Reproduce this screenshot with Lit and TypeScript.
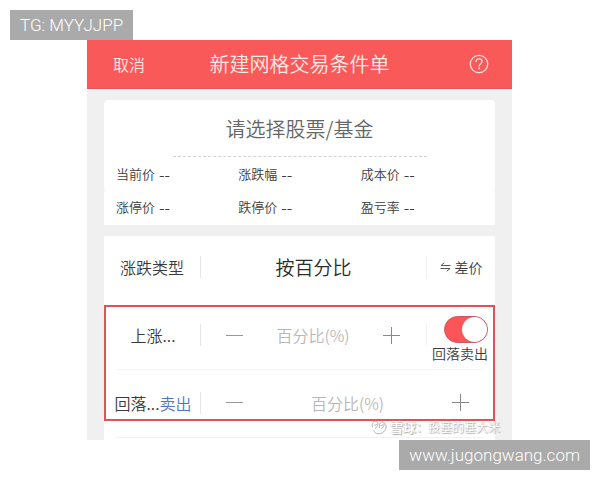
import { LitElement, html, css, svg } from "lit";
import { customElement, state } from "lit/decorators.js";

const QUOTES = ["当前价", "涨跌幅", "成本价", "涨停价", "跌停价", "盈亏率"];

const minus = html`<svg width="17" height="17" viewBox="0 0 17 17" aria-hidden="true">
  ${svg`<path d="M0 8.5H17" stroke="#999" fill="none"/>`}</svg>`;
const plus = html`<svg width="17" height="17" viewBox="0 0 17 17" aria-hidden="true">
  ${svg`<path d="M0 8.5H17M8.5 0V17" stroke="#888" fill="none"/>`}</svg>`;

@customElement("app-root")
export class AppRoot extends LitElement {
  @state() private sellOnFall = true;

  static styles = css`
    :host {
      display: block;
      position: relative;
      box-sizing: border-box;
      min-height: 100vh;
      padding: 40px 88px 40px 87px;
      background: #fff;
      color: #3c3c3c;
      font-family: "Noto Sans CJK SC", sans-serif;
      font-weight: 350;
    }
    * { box-sizing: border-box; }
    button, input {
      font: inherit;
      color: inherit;
      border: 0;
      background: none;
      padding: 0;
      margin: 0;
    }
    svg { display: block; }
    .screen {
      position: relative;
      background: #f0f0f0;
    }
    .bar {
      display: grid;
      grid-template-columns: 48px 1fr 48px;
      align-items: center;
      height: 49px;
      padding: 0 18px;
      background: #f95959;
      border-bottom: 1px solid #dc5a5a;
      color: #ffeae6;
    }
    .cancel { font-size: 16px; line-height: 24px; }
    .title {
      margin: 0;
      font-size: 20px;
      line-height: 28px;
      font-weight: 350;
      text-align: center;
      white-space: nowrap;
    }
    .help { justify-self: end; margin-right: 5px; }
    .body { padding: 11px 17px 0; }
    .pick {
      padding: 0 12px 0;
      height: 90px;
      background: #fff;
      border-radius: 4px 4px 2px 2px;
    }
    .stock {
      display: block;
      width: 100%;
      height: 56px;
      font-size: 20px;
      color: #666;
    }
    .dash {
      width: 254px;
      max-width: 70%;
      margin: 0 auto;
      border-top: 1px dashed #d4d4d4;
    }
    .quotes {
      display: grid;
      grid-template-columns: repeat(3, 1fr);
      height: 34px;
      margin: 0;
      padding: 0 12px;
      align-items: center;
      font-size: 13px;
      line-height: 20px;
    }
    .pick .quotes { padding: 0; }
    .rest {
      background: #fff;
      border-radius: 2px 2px 0 0;
      height: 35px;
    }
    .quote { display: flex; gap: 4px; }
    .quote dd { margin: 0; font-size: 16px; }
    .form { margin-top: 11px; background: #fff; height: 204px; }
    .row {
      display: grid;
      grid-template-columns: 96px 1fr 68px;
      align-items: center;
    }
    .type { height: 69px; padding-bottom: 7px; }
    .name { text-align: center; font-size: 16px; line-height: 24px; white-space: nowrap; }
    .mid {
      display: flex;
      align-items: center;
      height: 22px;
      border-left: 1px solid #e6e6e6;
      border-right: 1px solid #f2f2f2;
    }
    .value { flex: 1; font-size: 19px; line-height: 22px; color: #2c2c2c; }
    .switch-type {
      display: flex;
      align-items: center;
      justify-content: center;
      gap: 4px;
      font-size: 14px;
      line-height: 22px;
    }
    .marked { border: 2px solid #dc5555; height: 116px; }
    .marked .row { grid-template-columns: 94px 1fr 66px; }
    .rise { height: 63px; padding-bottom: 7px; }
    .rule { height: 1px; margin: -1px 11px 0; background: #f3f3f3; }
    .marked .fall { grid-template-columns: 94px 1fr; height: 49px; padding-top: 16px; }
    .step { padding: 0 26px 0 25px; }
    .fall .step { border-right: 0; padding-right: 24px; }
    .amount {
      flex: 1;
      min-width: 0;
      width: 0;
      height: 22px;
      font-size: 16px;
      text-align: center;
      outline: none;
    }
    .amount::placeholder { color: #b8b8b8; opacity: 1; }
    .blue { color: #4a78c4; }
    .toggle {
      display: flex;
      flex-direction: column;
      align-items: flex-end;
      padding: 8px 5px 0 0;
      font-size: 14px;
      line-height: 20px;
      white-space: nowrap;
    }
    .check {
      appearance: none;
      display: flex;
      width: 44px;
      height: 27px;
      border-radius: 14px;
      background: #ccc;
      border: 1px solid #bbb;
    }
    .check::before {
      content: "";
      width: 25px;
      height: 25px;
      border-radius: 50%;
      background: #fff;
    }
    .check:checked {
      background: #fb5558;
      border-color: #c85868;
      justify-content: flex-end;
    }
    .end { margin: 16px 12px 0; height: 1px; background: #f1f1f1; }
    .credit {
      position: absolute;
      right: 12px;
      bottom: 4px;
      display: flex;
      align-items: center;
      gap: 3px;
      color: #fff;
      font-size: 12px;
      line-height: 18px;
      text-shadow: 1px 1px 1px #aaa, 0 0 1px #bbb;
      white-space: nowrap;
    }
    .brand { font-size: 13px; font-weight: 700; }
    .tag {
      position: absolute;
      height: 30px;
      padding: 0 10px;
      background: #aaa;
      color: #fff;
      font: 300 17px/30px Roboto, "Liberation Sans", sans-serif;
      text-decoration: none;
      white-space: nowrap;
    }
    .top { left: 10px; top: 10px; }
    .bottom { right: 10px; bottom: 10px; }
  `;

  private quotes(names: string[]) {
    return html`<dl class="quotes">
      ${names.map((n) => html`<div class="quote"><dt>${n}</dt><dd>--</dd></div>`)}
    </dl>`;
  }

  render() {
    return html`
      <main class="screen">
        <header class="bar">
          <button class="cancel">取消</button>
          <h1 class="title">新建网格交易条件单</h1>
          <button class="help" aria-label="帮助">
            <svg width="20" height="20" viewBox="0 0 20 20" fill="none" stroke="#ffe3dc" stroke-width="1.3">
              <circle cx="10" cy="10" r="8.7" />
              <path d="M6.900 8c0-1.900 1.300-3.200 3.100-3.200s3.100 1.100 3.100 2.800c0 2.200-3 2.300-3 4.800M10.100 13.600v1.600" />
            </svg>
          </button>
        </header>
        <div class="body">
          <section class="pick">
            <button class="stock">请选择股票/基金</button>
            <div class="dash"></div>
            ${this.quotes(QUOTES.slice(0, 3))}
          </section>
          <section class="rest">${this.quotes(QUOTES.slice(3))}</section>
          <form class="form">
            <div class="row type">
              <span class="name">涨跌类型</span>
              <div class="mid"><button type="button" class="value">按百分比</button></div>
              <button type="button" class="switch-type">
                <svg width="11" height="10" viewBox="0 0 11 10" fill="none" stroke="#555">
                  <path d="M10.500 3.500H1L4.200 .8M.5 6.500H10L6.800 9.200" />
                </svg>
                差价
              </button>
            </div>
            <div class="marked">
              <div class="row rise">
                <label class="name" for="rise">上涨...</label>
                <div class="mid step">
                  <button type="button" aria-label="减少">${minus}</button>
                  <input id="rise" class="amount" placeholder="百分比(%)" />
                  <button type="button" aria-label="增加">${plus}</button>
                </div>
                <label class="toggle">
                  <input
                    class="check"
                    type="checkbox"
                    .checked=${this.sellOnFall}
                    @change=${(e: Event) => (this.sellOnFall = (e.target as HTMLInputElement).checked)}
                  />
                  回落卖出
                </label>
              </div>
              <div class="rule"></div>
              <div class="row fall">
                <label class="name" for="fall">回落...<span class="blue">卖出</span></label>
                <div class="mid step">
                  <button type="button" aria-label="减少">${minus}</button>
                  <input id="fall" class="amount" placeholder="百分比(%)" />
                  <button type="button" aria-label="增加">${plus}</button>
                </div>
              </div>
            </div>
            <div class="end"></div>
          </form>
        </div>
        <div class="credit">
          <svg width="16" height="16" viewBox="0 0 16 16" fill="none" stroke="#b0b0b0">
            <path d="M2.500 11.500C4 15 9 16 12.500 13S15.500 5 13.500 4" />
            <path d="M1.500 8C0 4.500 3 1.500 5.500 2.500S7 8 4 9.500M8.500 9C8 5 10 2.500 12 3s1.500 5-2 7M3 5.500c1 1 2 1 3-.5M9.500 6.500c1 .5 2 0 2.500-1" />
          </svg>
          <span><span class="brand">雪球</span>：投基的基大米</span>
        </div>
      </main>
      <div class="tag top">TG: MYYJJPP</div>
      <a class="tag bottom" href="http://www.jugongwang.com">www.jugongwang.com</a>
    `;
  }
}
